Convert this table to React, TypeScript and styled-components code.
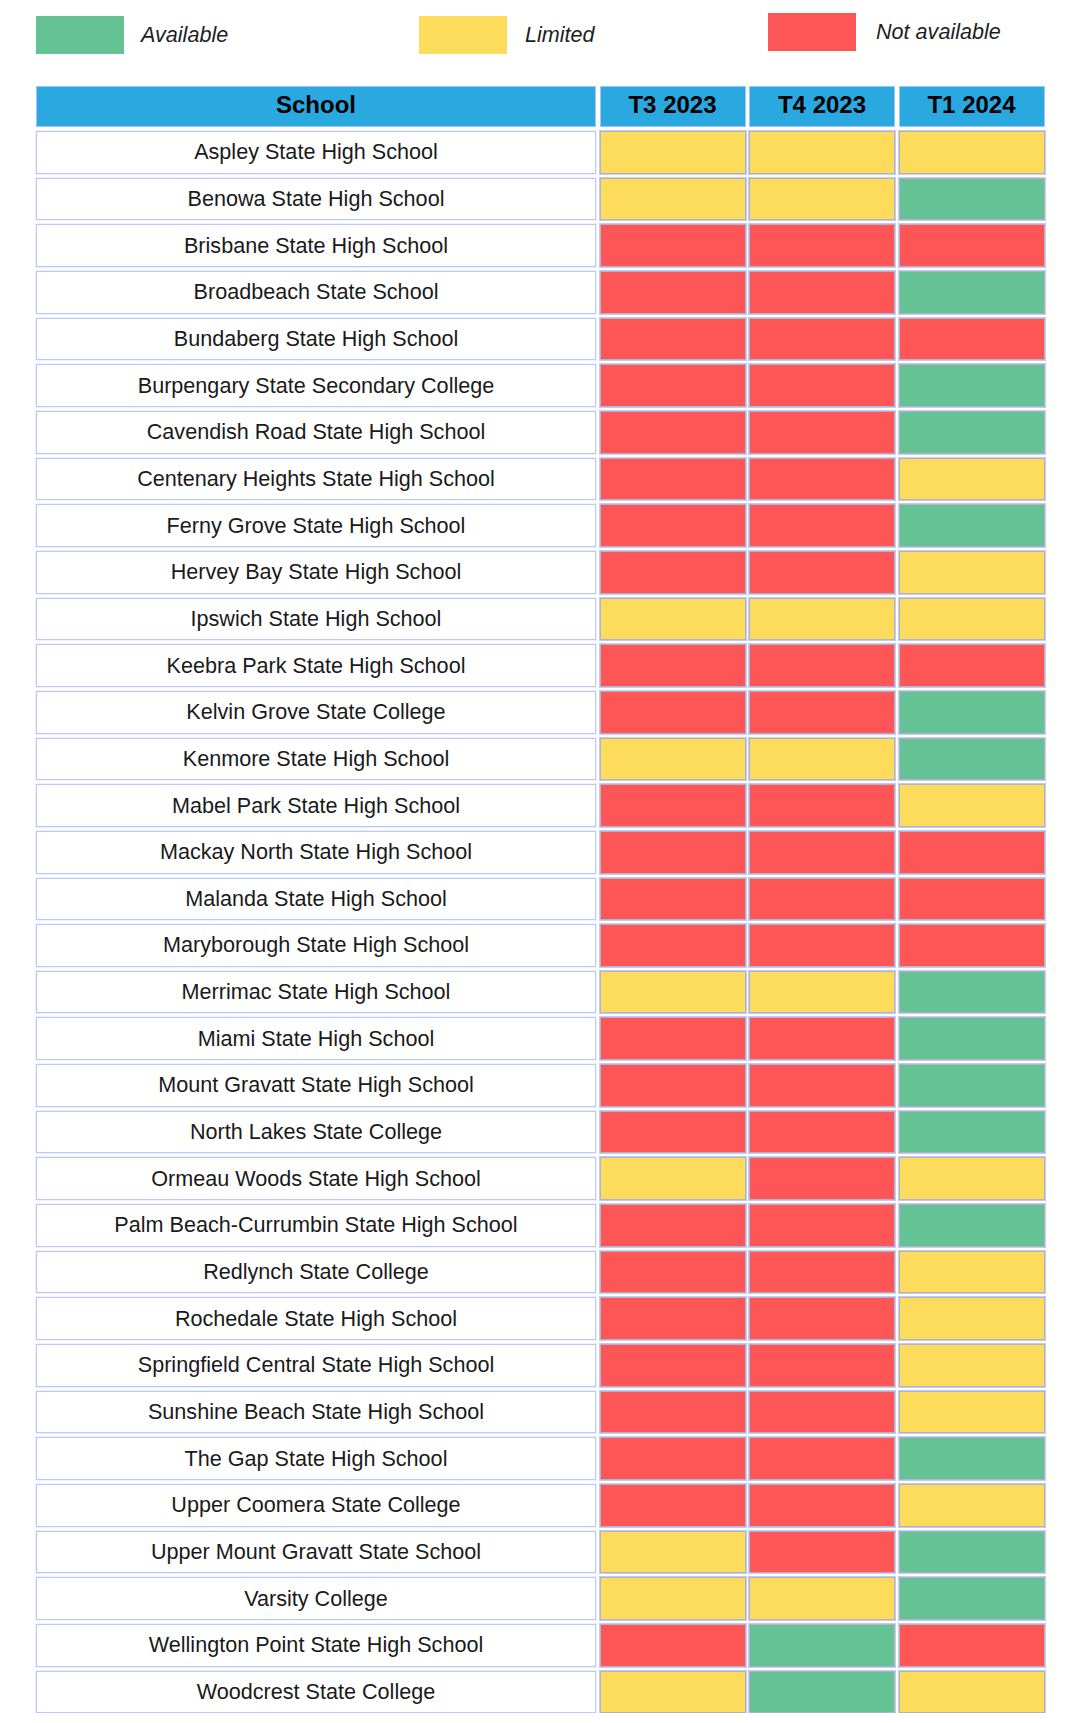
import React from 'react';
import styled, { createGlobalStyle } from 'styled-components';

type Status = 'available' | 'limited' | 'none';

const statusColor: Record<Status, string> = {
  available: '#65c295',
  limited: '#fddc5b',
  none: '#fe5656',
};

const GlobalStyle = createGlobalStyle`
  body {
    margin: 0;
    background: #ffffff;
    font-family: "Liberation Sans", Arial, sans-serif;
    color: #1c1c1c;
  }
`;

const Page = styled.div`
  width: 1080px;
  padding: 16px 0 0 36px;
  box-sizing: border-box;
`;

const Legend = styled.div`
  display: grid;
  grid-template-columns: 383px 349px auto;
  height: 38px;
  margin-bottom: 32px;
`;

const LegendItem = styled.div<{ $lift?: number }>`
  display: flex;
  align-items: center;
  transform: translateY(${(p) => -(p.$lift || 0)}px);
`;

const Swatch = styled.div<{ $status: Status; $gap: number }>`
  width: 88px;
  height: 38px;
  background: ${(p) => statusColor[p.$status]};
  margin-right: ${(p) => p.$gap}px;
`;

const LegendLabel = styled.span`
  font-style: italic;
  font-size: 21.6px;
  color: #1e1e1e;
`;

const Table = styled.div`
  display: flex;
  flex-direction: column;
  gap: 4px;
  width: 1009px;
`;

const Row = styled.div<{ $head?: boolean }>`
  display: grid;
  grid-template-columns: 560px 146px 146px 146px;
  column-gap: 3.5px;
  height: ${(p) => (p.$head ? '41px' : '42.67px')};
`;

const HeadCell = styled.div`
  display: flex;
  align-items: center;
  justify-content: center;
  padding-bottom: 3px;
  background: #29a9e0;
  border: 1px solid #9fc4f6;
  box-sizing: border-box;
  font-size: 24px;
  font-weight: bold;
  color: #000;
`;

const NameCell = styled.div`
  display: flex;
  align-items: center;
  justify-content: center;
  border: 1.5px solid #bcc7fb;
  box-shadow: 0 0 0 0.5px #dde3ff;
  box-sizing: border-box;
  font-size: 21.6px;
  color: #1a1a1a;
`;

const StatusCell = styled.div<{ $status: Status }>`
  background: ${(p) => statusColor[p.$status]};
  border: 1px solid #b2b4c6;
  box-shadow: 0 0 0 1px #c2cbfa;
  box-sizing: border-box;
`;

const Y: Status = 'limited';
const R: Status = 'none';
const G: Status = 'available';

const schools: [string, Status, Status, Status][] = [
  ['Aspley State High School', Y, Y, Y],
  ['Benowa State High School', Y, Y, G],
  ['Brisbane State High School', R, R, R],
  ['Broadbeach State School', R, R, G],
  ['Bundaberg State High School', R, R, R],
  ['Burpengary State Secondary College', R, R, G],
  ['Cavendish Road State High School', R, R, G],
  ['Centenary Heights State High School', R, R, Y],
  ['Ferny Grove State High School', R, R, G],
  ['Hervey Bay State High School', R, R, Y],
  ['Ipswich State High School', Y, Y, Y],
  ['Keebra Park State High School', R, R, R],
  ['Kelvin Grove State College', R, R, G],
  ['Kenmore State High School', Y, Y, G],
  ['Mabel Park State High School', R, R, Y],
  ['Mackay North State High School', R, R, R],
  ['Malanda State High School', R, R, R],
  ['Maryborough State High School', R, R, R],
  ['Merrimac State High School', Y, Y, G],
  ['Miami State High School', R, R, G],
  ['Mount Gravatt State High School', R, R, G],
  ['North Lakes State College', R, R, G],
  ['Ormeau Woods State High School', Y, R, Y],
  ['Palm Beach-Currumbin State High School', R, R, G],
  ['Redlynch State College', R, R, Y],
  ['Rochedale State High School', R, R, Y],
  ['Springfield Central State High School', R, R, Y],
  ['Sunshine Beach State High School', R, R, Y],
  ['The Gap State High School', R, R, G],
  ['Upper Coomera State College', R, R, Y],
  ['Upper Mount Gravatt State School', Y, R, G],
  ['Varsity College', Y, Y, G],
  ['Wellington Point State High School', R, G, R],
  ['Woodcrest State College', Y, G, Y],
];

const terms = ['T3 2023', 'T4 2023', 'T1 2024'];

export default function App() {
  return (
    <Page>
      <GlobalStyle />
      <Legend>
        <LegendItem>
          <Swatch $status="available" $gap={17} />
          <LegendLabel>Available</LegendLabel>
        </LegendItem>
        <LegendItem>
          <Swatch $status="limited" $gap={18} />
          <LegendLabel>Limited</LegendLabel>
        </LegendItem>
        <LegendItem $lift={3}>
          <Swatch $status="none" $gap={20} />
          <LegendLabel>Not available</LegendLabel>
        </LegendItem>
      </Legend>

      <Table>
        <Row $head>
          <HeadCell>School</HeadCell>
          {terms.map((t) => (
            <HeadCell key={t}>{t}</HeadCell>
          ))}
        </Row>
        {schools.map(([name, t3, t4, t1]) => (
          <Row key={name}>
            <NameCell>{name}</NameCell>
            <StatusCell $status={t3} />
            <StatusCell $status={t4} />
            <StatusCell $status={t1} />
          </Row>
        ))}
      </Table>
    </Page>
  );
}
